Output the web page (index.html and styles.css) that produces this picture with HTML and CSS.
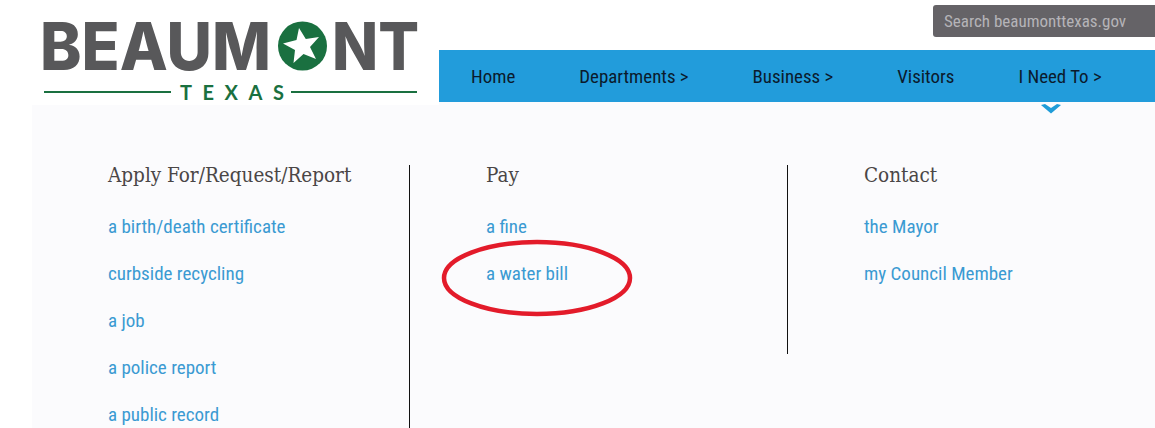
FILE: index.html
```html
<!DOCTYPE html>
<html lang="en">
<head>
    <meta charset="UTF-8">
    <meta name="viewport" content="width=device-width, initial-scale=1.0">
    <title>Beaumont Texas</title>
    <link rel="stylesheet" href="styles.css">
</head>
<body>
    <header class="site-header">
        <a class="logo" href="#">
            <svg width="407" height="105" viewBox="0 0 407 105">
                <text class="logo-word" x="8" y="70" textLength="231" lengthAdjust="spacingAndGlyphs">BEAUM</text>
                <circle cx="270.5" cy="46" r="24.5" fill="#1a7040"/>
                <polygon points="267,28 273.8,39 287,37 278,47 284,59 271.5,54 261.5,63 263,50 251,43.5 264.5,40" fill="#fff"/>
                <text class="logo-word" x="300" y="70" textLength="87" lengthAdjust="spacingAndGlyphs">NT</text>
                <rect x="12" y="91" width="127" height="2" fill="#1a7040"/>
                <text class="logo-sub" x="148" y="100" textLength="104">TEXAS</text>
                <rect x="259" y="91" width="126" height="2" fill="#1a7040"/>
            </svg>
        </a>
        <div class="header-right">
            <div class="search-row">
                <div class="search-box">Search beaumonttexas.gov</div>
            </div>
            <nav class="main-nav">
                <a href="#">Home</a>
                <a href="#">Departments &gt;</a>
                <a href="#">Business &gt;</a>
                <a href="#">Visitors</a>
                <a href="#">I Need To &gt;</a>
            </nav>
        </div>
    </header>

    <main class="menu-panel">
        <svg class="nav-arrow" width="20" height="10" viewBox="0 0 20 10">
            <path d="M0 1 L4 0 L10 4 L16 0 L20 1 L10 9.5 Z" fill="#1f9cd8"/>
        </svg>
        <section class="menu-col tall">
            <h3>Apply For/Request/Report</h3>
            <ul>
                <li><a href="#">a birth/death certificate</a></li>
                <li><a href="#">curbside recycling</a></li>
                <li><a href="#">a job</a></li>
                <li><a href="#">a police report</a></li>
                <li><a href="#">a public record</a></li>
            </ul>
        </section>
        <section class="menu-col short">
            <h3>Pay</h3>
            <ul>
                <li><a href="#">a fine</a></li>
                <li><a href="#">a water bill</a></li>
            </ul>
        </section>
        <section class="menu-col last">
            <h3>Contact</h3>
            <ul>
                <li><a href="#">the Mayor</a></li>
                <li><a href="#">my Council Member</a></li>
            </ul>
        </section>
        <!-- hand drawn circle around the water bill link -->
        <svg class="circle-mark" width="194" height="80" viewBox="0 0 194 80">
            <ellipse cx="97" cy="40" rx="93" ry="36" fill="none" stroke="#e31b2a" stroke-width="4.5"/>
        </svg>
    </main>
</body>
</html>
```

FILE: styles.css
```css
html, body {
    margin: 0;
    height: 428px;
    overflow: hidden;
}
body {
    background: white;
    font-family: Roboto, "Liberation Sans", sans-serif;
    font-stretch: 75%;
}
a { text-decoration: none; }

.site-header {
    display: flex;
    height: 102px;
    padding-left: 32px;
}
.logo {
    display: block;
    width: 407px;
    height: 105px;
    background: white;
    position: relative;
    z-index: 1;
}
.logo svg { display: block; }
.logo-word {
    font-family: Inter, Lato, sans-serif;
    font-stretch: normal;
    font-weight: 800;
    font-size: 66px;
    fill: #58585a;
}
.logo-sub {
    font-family: Lato, sans-serif;
    font-stretch: normal;
    font-weight: 700;
    font-size: 20px;
    fill: #1a7040;
}

.header-right {
    flex: 1;
    display: flex;
    flex-direction: column;
}
.search-row {
    height: 50px;
    display: flex;
    justify-content: flex-end;
    padding-top: 5px;
    box-sizing: border-box;
}
.search-box {
    width: 222px;
    height: 32px;
    line-height: 32px;
    box-sizing: border-box;
    padding-left: 11px;
    background: #656367;
    color: #b5b4b8;
    font-size: 17px;
    border-radius: 3px 0 0 3px;
}
.main-nav {
    height: 52px;
    background: #229cdb;
    display: flex;
    align-items: center;
    gap: 64px;
    padding-left: 32px;
}
.main-nav a {
    color: #0b1a2c;
    font-size: 18.9px;
}

.menu-panel {
    position: relative;
    display: flex;
    align-items: flex-start;
    margin-left: 32px;
    padding-top: 63px;
    height: 326px;
    box-sizing: border-box;
    background: #fbfbfd;
}
.nav-arrow {
    position: absolute;
    left: 1009px;
    top: 2px;
}
.circle-mark {
    position: absolute;
    left: 408px;
    top: 136px;
}
.menu-col {
    flex-shrink: 0;
    width: 378px;
    box-sizing: border-box;
    padding-left: 76px;
}
.menu-col.tall {
    height: 263px;
    border-right: 1px solid #111;
}
.menu-col.short {
    height: 189px;
    border-right: 1px solid #111;
}
.menu-col h3 {
    margin: 0 0 18px;
    font-family: "DejaVu Serif Condensed", "DejaVu Serif", serif;
    font-stretch: normal;
    font-weight: 400;
    font-size: 20.5px;
    line-height: 20px;
    color: #4a4646;
}
.menu-col ul {
    list-style-type: none;
    margin: 0;
    padding: 0;
}
.menu-col li {
    height: 47px;
    line-height: 47px;
    font-size: 19px;
}
.menu-col li a { color: #3a9ad2; }
```
